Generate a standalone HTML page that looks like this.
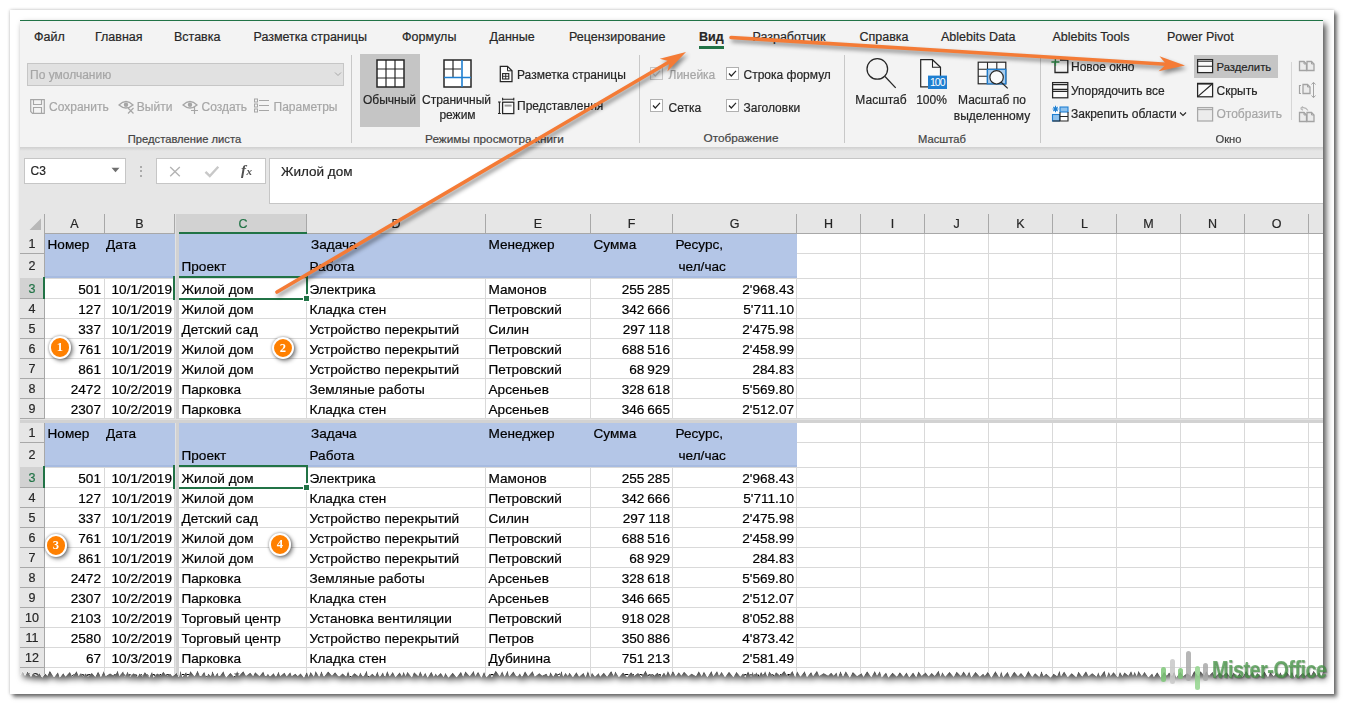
<!DOCTYPE html><html><head><meta charset="utf-8"><style>
html,body{margin:0;padding:0}
body{width:1345px;height:705px;background:#fff;position:relative;overflow:hidden;font-family:"Liberation Sans", sans-serif}
.r{position:absolute}
.t{position:absolute;white-space:pre;font-family:"Liberation Sans", sans-serif;-webkit-text-stroke:0.2px currentColor}
</style></head><body>
<div class="r" style="left:10px;top:10px;width:1324px;height:684px;background:#fff;box-shadow:0 0 3px rgba(0,0,0,.25),3px 3px 4px rgba(0,0,0,.55)"></div>
<div class="r" style="left:0;top:0;width:1345px;height:705px;filter:drop-shadow(3px 4px 3px rgba(0,0,0,.7))">
<div class="r" style="left:0;top:0;width:1345px;height:705px;clip-path:polygon(20px 20px,1323px 20px,1323.0px 671.5px,1321.0px 676.8px,1319.3px 672.1px,1316.7px 675.6px,1313.7px 670.6px,1310.9px 675.6px,1309.1px 671.8px,1305.2px 675.7px,1303.0px 672.4px,1298.6px 676.7px,1296.0px 673.4px,1294.3px 677.2px,1291.9px 670.9px,1290.1px 676.1px,1286.1px 671.0px,1282.9px 676.8px,1280.3px 672.1px,1278.6px 675.6px,1276.5px 672.5px,1273.7px 676.1px,1270.4px 671.9px,1268.0px 677.1px,1264.4px 671.2px,1261.2px 676.6px,1257.1px 672.7px,1254.7px 677.5px,1252.9px 671.8px,1249.1px 675.8px,1246.1px 670.6px,1242.6px 677.0px,1239.4px 673.1px,1237.0px 676.9px,1233.7px 672.2px,1230.8px 677.2px,1226.5px 671.9px,1223.0px 675.6px,1219.4px 672.4px,1214.9px 677.1px,1212.6px 671.7px,1209.0px 675.5px,1206.2px 671.0px,1204.3px 675.6px,1200.5px 670.9px,1198.3px 676.3px,1194.2px 670.7px,1191.3px 676.6px,1187.2px 673.0px,1183.1px 676.1px,1180.3px 671.6px,1176.2px 677.4px,1174.2px 671.0px,1172.0px 676.0px,1169.1px 672.3px,1166.8px 675.5px,1164.0px 671.6px,1160.8px 677.4px,1157.2px 672.0px,1153.9px 676.9px,1152.2px 673.2px,1148.4px 677.2px,1144.5px 671.7px,1141.8px 675.7px,1138.4px 670.7px,1136.7px 675.9px,1134.7px 671.5px,1133.0px 675.5px,1131.1px 670.8px,1128.5px 675.6px,1124.4px 672.3px,1122.4px 676.0px,1119.9px 671.6px,1118.0px 677.2px,1113.5px 671.9px,1110.6px 675.7px,1108.8px 671.5px,1106.5px 677.2px,1104.5px 670.6px,1100.2px 676.6px,1098.2px 672.1px,1096.6px 676.6px,1092.2px 673.1px,1088.6px 676.0px,1086.0px 671.0px,1082.2px 676.6px,1078.4px 671.5px,1076.2px 677.1px,1071.7px 673.1px,1067.8px 677.1px,1064.1px 671.2px,1061.0px 676.2px,1059.5px 670.6px,1057.1px 676.0px,1053.5px 673.4px,1050.7px 677.4px,1046.2px 673.4px,1043.6px 675.9px,1041.5px 671.1px,1039.3px 676.7px,1035.1px 673.0px,1032.2px 676.8px,1028.3px 670.8px,1024.8px 677.3px,1021.0px 672.8px,1018.0px 675.9px,1014.2px 671.5px,1010.3px 677.4px,1007.6px 671.7px,1003.2px 676.9px,1001.2px 670.9px,999.3px 677.3px,995.4px 670.9px,991.4px 677.5px,987.9px 671.6px,984.8px 675.8px,983.2px 673.4px,979.8px 676.6px,975.5px 671.8px,971.4px 677.2px,969.2px 671.3px,966.8px 676.0px,963.6px 671.3px,960.8px 675.8px,956.6px 671.6px,953.7px 676.7px,949.5px 671.8px,945.3px 676.5px,942.2px 672.1px,940.6px 676.4px,938.6px 670.5px,934.7px 675.8px,931.7px 672.7px,928.6px 676.2px,925.5px 672.2px,921.7px 675.7px,918.5px 671.2px,916.2px 677.0px,913.1px 672.2px,909.3px 677.3px,906.5px 672.3px,903.5px 676.5px,899.9px 671.9px,896.8px 676.5px,892.5px 672.6px,888.4px 677.4px,886.1px 672.2px,881.8px 677.2px,879.9px 670.9px,877.0px 675.6px,874.8px 670.7px,871.3px 677.1px,867.1px 671.0px,863.5px 676.8px,861.5px 673.1px,857.1px 675.9px,852.8px 671.7px,849.8px 677.5px,845.8px 671.0px,843.0px 676.5px,840.5px 671.1px,838.0px 676.9px,836.5px 672.2px,833.7px 675.5px,831.2px 672.4px,828.1px 675.6px,823.7px 672.9px,819.3px 675.7px,817.0px 670.6px,813.1px 676.0px,811.2px 671.8px,807.0px 677.1px,804.7px 670.9px,800.5px 676.6px,796.9px 670.8px,795.2px 676.9px,792.4px 670.7px,788.1px 676.8px,784.2px 670.8px,780.1px 675.6px,776.0px 671.9px,773.5px 676.6px,769.2px 671.3px,767.4px 676.6px,765.1px 670.8px,763.2px 675.6px,761.1px 671.4px,758.6px 677.0px,756.3px 672.0px,754.2px 676.2px,752.7px 671.3px,751.1px 677.0px,748.0px 671.1px,745.1px 677.4px,743.2px 673.0px,740.4px 676.5px,736.4px 671.7px,733.4px 676.9px,729.0px 671.5px,725.0px 676.9px,721.6px 671.7px,719.0px 675.6px,717.1px 670.7px,713.4px 676.0px,711.4px 670.8px,707.4px 677.2px,703.9px 671.3px,701.7px 676.1px,698.8px 671.0px,695.9px 676.0px,691.6px 673.4px,688.4px 676.0px,684.0px 671.4px,681.4px 675.5px,678.8px 671.9px,675.8px 675.9px,672.8px 670.5px,670.5px 675.7px,667.8px 670.6px,666.2px 676.1px,664.0px 672.3px,660.9px 677.0px,657.5px 672.6px,653.3px 676.3px,650.8px 673.5px,648.9px 676.9px,645.5px 670.6px,641.5px 677.3px,638.1px 672.7px,634.1px 675.8px,631.1px 672.0px,627.1px 677.1px,623.1px 672.3px,618.9px 676.9px,615.3px 671.2px,613.7px 675.8px,611.2px 670.8px,607.1px 676.6px,603.8px 672.4px,600.2px 676.5px,598.7px 672.9px,595.0px 676.5px,591.9px 672.5px,590.2px 677.0px,587.9px 670.7px,585.6px 677.0px,583.5px 672.7px,579.1px 676.5px,576.4px 671.9px,572.9px 677.0px,569.5px 672.4px,567.8px 675.8px,565.5px 672.7px,563.1px 676.6px,561.6px 670.7px,559.3px 676.8px,555.7px 672.5px,553.3px 676.5px,550.4px 671.9px,548.6px 677.3px,546.5px 673.4px,542.2px 675.5px,539.3px 673.0px,534.9px 676.4px,532.6px 671.1px,528.2px 675.9px,525.0px 670.9px,521.9px 677.4px,520.0px 673.0px,517.0px 677.3px,513.4px 671.2px,509.2px 676.5px,507.6px 670.5px,504.6px 676.4px,502.2px 670.9px,499.7px 676.1px,495.7px 670.5px,491.9px 677.2px,490.1px 673.3px,486.4px 677.3px,484.1px 671.6px,481.4px 677.5px,478.1px 671.6px,475.3px 676.1px,473.7px 670.8px,469.7px 676.1px,465.4px 671.2px,463.1px 676.5px,461.0px 671.6px,456.6px 677.3px,452.7px 672.4px,448.5px 677.4px,445.3px 672.7px,443.7px 677.0px,440.8px 672.8px,437.4px 676.1px,435.7px 673.3px,433.9px 676.4px,431.3px 671.4px,427.6px 677.5px,425.3px 672.5px,422.9px 676.6px,420.2px 671.0px,418.3px 675.9px,414.0px 672.0px,411.9px 677.3px,407.4px 671.8px,405.5px 675.9px,403.7px 671.5px,401.9px 676.0px,399.7px 672.2px,395.5px 677.0px,392.8px 671.7px,389.7px 676.3px,387.2px 670.7px,384.8px 677.4px,383.0px 672.0px,379.6px 677.2px,377.4px 671.3px,375.2px 676.3px,372.3px 673.4px,368.3px 677.2px,366.7px 670.6px,363.1px 677.3px,360.2px 672.3px,358.7px 676.3px,354.4px 673.0px,350.3px 677.4px,348.1px 670.8px,346.1px 676.5px,342.6px 673.3px,338.9px 676.8px,335.1px 671.9px,332.0px 675.6px,328.1px 671.2px,323.9px 676.8px,321.4px 670.9px,319.2px 676.8px,315.6px 670.8px,313.9px 676.5px,310.6px 671.7px,308.5px 676.7px,306.9px 671.4px,304.0px 677.4px,300.6px 673.2px,297.7px 676.0px,295.4px 673.4px,291.8px 676.1px,290.3px 672.0px,286.7px 676.3px,284.5px 672.5px,280.2px 676.0px,278.6px 671.5px,275.8px 676.9px,273.7px 672.9px,270.0px 676.5px,267.9px 673.4px,265.5px 677.1px,263.3px 671.2px,259.5px 676.1px,255.1px 672.0px,253.1px 675.9px,250.3px 672.5px,246.0px 675.8px,243.3px 671.1px,238.9px 675.8px,237.2px 670.7px,234.5px 677.3px,230.4px 672.7px,225.9px 677.4px,223.4px 671.1px,219.1px 677.0px,217.5px 672.5px,214.9px 676.2px,212.4px 671.0px,210.9px 676.1px,208.3px 673.4px,206.4px 677.4px,204.3px 671.6px,200.4px 677.1px,197.6px 670.6px,194.6px 676.2px,190.4px 671.1px,187.8px 677.3px,186.2px 671.7px,182.3px 677.0px,180.6px 670.6px,178.9px 677.3px,176.7px 672.7px,172.5px 676.2px,170.2px 673.4px,166.8px 676.0px,163.2px 671.4px,160.8px 675.5px,157.1px 673.2px,153.7px 677.4px,152.1px 671.2px,149.2px 677.4px,144.8px 671.7px,142.6px 676.4px,139.6px 673.3px,137.5px 677.1px,133.8px 673.0px,130.0px 676.7px,127.5px 671.5px,124.9px 677.1px,123.2px 671.1px,119.4px 676.0px,117.7px 670.6px,114.6px 676.2px,110.1px 673.2px,105.7px 676.0px,103.9px 670.8px,100.9px 676.9px,98.1px 671.2px,95.3px 676.7px,91.8px 672.7px,87.8px 676.8px,85.9px 673.0px,83.5px 676.6px,80.9px 672.7px,78.8px 676.0px,76.6px 671.0px,72.4px 676.7px,69.9px 671.7px,65.5px 676.5px,63.3px 672.9px,59.8px 677.5px,58.0px 671.9px,54.0px 677.2px,49.8px 670.6px,47.4px 675.7px,45.4px 673.4px,42.1px 677.4px,39.5px 673.1px,36.6px 676.0px,32.8px 673.3px,31.0px 676.7px,27.6px 671.2px,25.0px 675.8px,22.9px 671.3px,20px 675px);background:#fff">

<div class="r" style="left:20px;top:20px;width:1303px;height:1px;background:#217346"></div>
<div class="r" style="left:20px;top:21px;width:1303px;height:126px;background:#f3f3f3"></div>
<div class="r" style="left:20px;top:147px;width:1303px;height:67px;background:#e6e6e6"></div>
<div class="r" style="left:20px;top:147px;width:1303px;height:4px;background:linear-gradient(#cfcfcf,#e6e6e6)"></div>
<div class="t" style="left:34px;top:29.0px;font-size:12.5px;line-height:16px;color:#262626;font-weight:normal;">Файл</div>
<div class="t" style="left:95px;top:29.0px;font-size:12.5px;line-height:16px;color:#262626;font-weight:normal;">Главная</div>
<div class="t" style="left:174px;top:29.0px;font-size:12.5px;line-height:16px;color:#262626;font-weight:normal;">Вставка</div>
<div class="t" style="left:253.5px;top:29.0px;font-size:12.5px;line-height:16px;color:#262626;font-weight:normal;">Разметка страницы</div>
<div class="t" style="left:402px;top:29.0px;font-size:12.5px;line-height:16px;color:#262626;font-weight:normal;">Формулы</div>
<div class="t" style="left:489.5px;top:29.0px;font-size:12.5px;line-height:16px;color:#262626;font-weight:normal;">Данные</div>
<div class="t" style="left:569px;top:29.0px;font-size:12.5px;line-height:16px;color:#262626;font-weight:normal;">Рецензирование</div>
<div class="t" style="left:752.5px;top:29.0px;font-size:12.5px;line-height:16px;color:#262626;font-weight:normal;">Разработчик</div>
<div class="t" style="left:859.5px;top:29.0px;font-size:12.5px;line-height:16px;color:#262626;font-weight:normal;">Справка</div>
<div class="t" style="left:941px;top:29.0px;font-size:12.5px;line-height:16px;color:#262626;font-weight:normal;">Ablebits Data</div>
<div class="t" style="left:1052.5px;top:29.0px;font-size:12.5px;line-height:16px;color:#262626;font-weight:normal;">Ablebits Tools</div>
<div class="t" style="left:1167px;top:29.0px;font-size:12.5px;line-height:16px;color:#262626;font-weight:normal;">Power Pivot</div>
<div class="t" style="left:699px;top:29.0px;font-size:12.5px;line-height:16px;color:#262626;font-weight:bold;">Вид</div>
<div class="r" style="left:699px;top:46px;width:25px;height:3px;background:#217346"></div>
<div class="r" style="left:351px;top:55px;width:1px;height:88px;background:#c8c8c8"></div>
<div class="r" style="left:639px;top:55px;width:1px;height:88px;background:#c8c8c8"></div>
<div class="r" style="left:844px;top:55px;width:1px;height:88px;background:#c8c8c8"></div>
<div class="r" style="left:1040px;top:55px;width:1px;height:88px;background:#c8c8c8"></div>
<div class="r" style="left:1291px;top:62px;width:1px;height:58px;background:#d6d6d6"></div>
<div class="t" style="left:-15.5px;width:400px;text-align:center;top:132.0px;font-size:11.2px;line-height:14px;color:#444;font-weight:normal;">Представление листа</div>
<div class="t" style="left:294.5px;width:400px;text-align:center;top:131.5px;font-size:11.8px;line-height:15px;color:#444;font-weight:normal;">Режимы просмотра книги</div>
<div class="t" style="left:541px;width:400px;text-align:center;top:131.0px;font-size:11.8px;line-height:15px;color:#444;font-weight:normal;">Отображение</div>
<div class="t" style="left:742px;width:400px;text-align:center;top:132.0px;font-size:11.2px;line-height:14px;color:#444;font-weight:normal;">Масштаб</div>
<div class="t" style="left:1028.5px;width:400px;text-align:center;top:132.0px;font-size:11.2px;line-height:14px;color:#444;font-weight:normal;">Окно</div>
<div class="r" style="left:27px;top:63px;width:317px;height:23px;background:#e1e1e1;border:1px solid #c6c6c6;box-sizing:border-box"></div>
<div class="t" style="left:30px;top:68.0px;font-size:12px;line-height:15px;color:#a6a6a6;font-weight:normal;">По умолчанию</div>
<svg class="r" style="left:334px;top:71px" width="8" height="6" viewBox="0 0 8 6"><path d="M1 1.5 L4 4.5 L7 1.5" fill="none" stroke="#a6a6a6" stroke-width="1"/></svg>
<svg class="r" style="left:30px;top:98.5px" width="15" height="15" viewBox="0 0 15 15"><path d="M0.7 0.7H14.3V14.3H2.5L0.7 12.5Z" fill="none" stroke="#a6a6a6" stroke-width="1.2"/><path d="M3.5 0.7V5.5H11.5V0.7M3.5 14.3V8.5H11.5V14.3" fill="none" stroke="#a6a6a6" stroke-width="1.1"/></svg>
<div class="t" style="left:49px;top:99.5px;font-size:12px;line-height:15px;color:#a6a6a6;font-weight:normal;">Сохранить</div>
<svg class="r" style="left:118px;top:98px" width="17" height="16" viewBox="0 0 17 16"><path d="M1 7 Q8 0 15 7 Q8 13 1 7Z" fill="none" stroke="#a6a6a6" stroke-width="1.3"/><circle cx="8" cy="6.8" r="2.2" fill="#a6a6a6"/><path d="M10 10 L15.5 15.5 M15.5 10 L10 15.5" stroke="#a6a6a6" stroke-width="1.2"/></svg>
<div class="t" style="left:136.8px;top:99.5px;font-size:12px;line-height:15px;color:#a6a6a6;font-weight:normal;">Выйти</div>
<svg class="r" style="left:182px;top:98px" width="17" height="16" viewBox="0 0 17 16"><path d="M1 7 Q8 0 15 7 Q8 13 1 7Z" fill="none" stroke="#a6a6a6" stroke-width="1.3"/><circle cx="8" cy="6.8" r="2.2" fill="#a6a6a6"/><path d="M12.5 9 V16 M9 12.5 H16" stroke="#a6a6a6" stroke-width="1.2"/></svg>
<div class="t" style="left:201.5px;top:99.5px;font-size:12px;line-height:15px;color:#a6a6a6;font-weight:normal;">Создать</div>
<svg class="r" style="left:254px;top:98px" width="15" height="15" viewBox="0 0 15 15"><rect x="0.5" y="1" width="3" height="3" fill="none" stroke="#a6a6a6"/><rect x="0.5" y="6" width="3" height="3" fill="none" stroke="#a6a6a6"/><rect x="0.5" y="11" width="3" height="3" fill="none" stroke="#a6a6a6"/><path d="M5 2.5H15M5 7.5H15M5 12.5H15" stroke="#a6a6a6" stroke-width="1.2"/></svg>
<div class="t" style="left:273.5px;top:99.5px;font-size:12px;line-height:15px;color:#a6a6a6;font-weight:normal;">Параметры</div>
<div class="r" style="left:360px;top:54px;width:60px;height:73px;background:#c5c5c5"></div>
<svg class="r" style="left:376px;top:59px" width="29" height="29" viewBox="0 0 29 29"><rect x="1" y="1" width="27" height="27" fill="#fff" stroke="#262626" stroke-width="1.5"/><path d="M10 1V28M19 1V28M1 10H28M1 19H28" stroke="#262626" stroke-width="1.2"/></svg>
<div class="t" style="left:189.5px;width:400px;text-align:center;top:92.5px;font-size:12px;line-height:15px;color:#262626;font-weight:normal;">Обычный</div>
<svg class="r" style="left:443px;top:59px" width="29" height="29" viewBox="0 0 29 29"><rect x="1" y="1" width="27" height="27" fill="#fff" stroke="#262626" stroke-width="1.5"/><path d="M10 1V18M1 10H18" stroke="#262626" stroke-width="1.2"/><path d="M19 1V28M1 18.5H28" stroke="#1f7fd1" stroke-width="1.6"/></svg>
<div class="t" style="left:256.5px;width:400px;text-align:center;top:92.5px;font-size:12px;line-height:15px;color:#262626;font-weight:normal;">Страничный</div>
<div class="t" style="left:257.5px;width:400px;text-align:center;top:108.0px;font-size:12px;line-height:15px;color:#262626;font-weight:normal;">режим</div>
<svg class="r" style="left:499px;top:65px" width="15" height="18" viewBox="0 0 15 18"><path d="M1.3 1.3H8.5L13 5.8V16.7H1.3Z" fill="#fafafa" stroke="#262626" stroke-width="1.25"/><path d="M8.5 1.3V5.8H13" fill="none" stroke="#262626" stroke-width="1"/><rect x="3.6" y="8.6" width="6.2" height="5.4" fill="none" stroke="#262626" stroke-width="1.1"/><path d="M6.7 8.6V14M3.6 11.3H9.8" stroke="#262626" stroke-width=".9"/></svg>
<div class="t" style="left:517px;top:67.5px;font-size:12px;line-height:15px;color:#262626;font-weight:normal;">Разметка страницы</div>
<svg class="r" style="left:497px;top:97px" width="18" height="18" viewBox="0 0 18 18"><path d="M2.4 5V16.5M1 5H3.8M1 16.5H3.8M5.6 0.8V3.6M16.8 0.8V3.6M5.6 2.2H16.8" fill="none" stroke="#262626" stroke-width="1.1"/><rect x="5.6" y="5.2" width="11.2" height="11.4" fill="#fafafa" stroke="#262626" stroke-width="1.25"/><rect x="7.6" y="7.6" width="7" height="2" fill="#9a9a9a"/></svg>
<div class="t" style="left:517px;top:99.0px;font-size:12px;line-height:15px;color:#262626;font-weight:normal;">Представления</div>
<svg class="r" style="left:650px;top:67px" width="13" height="13" viewBox="0 0 13 13"><rect x="0.5" y="0.5" width="12" height="12" fill="#f0f0f0" stroke="#c6c6c6"/><path d="M3 6.5L5.3 9L10 3.8" fill="none" stroke="#c8c8c8" stroke-width="1.2"/></svg>
<div class="t" style="left:668.5px;top:68.0px;font-size:12px;line-height:15px;color:#a6a6a6;font-weight:normal;">Линейка</div>
<svg class="r" style="left:725.5px;top:67px" width="13" height="13" viewBox="0 0 13 13"><rect x="0.5" y="0.5" width="12" height="12" fill="#fff" stroke="#b0b0b0"/><path d="M3 6.5L5.3 9L10 3.8" fill="none" stroke="#262626" stroke-width="1.2"/></svg>
<div class="t" style="left:743.5px;top:68.0px;font-size:12px;line-height:15px;color:#262626;font-weight:normal;">Строка формул</div>
<svg class="r" style="left:650px;top:99px" width="13" height="13" viewBox="0 0 13 13"><rect x="0.5" y="0.5" width="12" height="12" fill="#fff" stroke="#b0b0b0"/><path d="M3 6.5L5.3 9L10 3.8" fill="none" stroke="#262626" stroke-width="1.2"/></svg>
<div class="t" style="left:668.5px;top:100.5px;font-size:12px;line-height:15px;color:#262626;font-weight:normal;">Сетка</div>
<svg class="r" style="left:725.5px;top:99px" width="13" height="13" viewBox="0 0 13 13"><rect x="0.5" y="0.5" width="12" height="12" fill="#fff" stroke="#b0b0b0"/><path d="M3 6.5L5.3 9L10 3.8" fill="none" stroke="#262626" stroke-width="1.2"/></svg>
<div class="t" style="left:743.5px;top:100.5px;font-size:12px;line-height:15px;color:#262626;font-weight:normal;">Заголовки</div>
<svg class="r" style="left:864px;top:56px" width="34" height="34" viewBox="0 0 34 34"><circle cx="13.3" cy="12.9" r="10.3" fill="none" stroke="#262626" stroke-width="1.25"/><path d="M21 20.5L31.7 31.9" stroke="#262626" stroke-width="1.25"/></svg>
<div class="t" style="left:681px;width:400px;text-align:center;top:92.5px;font-size:12px;line-height:15px;color:#262626;font-weight:normal;">Масштаб</div>
<svg class="r" style="left:918px;top:57px" width="32" height="34" viewBox="0 0 32 34"><path d="M2.7 2.7H14.5L22.5 10.2V29.8H2.7Z" fill="#fafafa" stroke="#262626" stroke-width="1.2"/><path d="M14.5 2.7V10.2H22.5" fill="none" stroke="#262626" stroke-width="1.1"/><rect x="10" y="18.6" width="19" height="13.4" fill="#1f7fd1"/><text x="19.3" y="29.3" font-size="10.5" fill="#fff" text-anchor="middle" font-family="Liberation Sans" letter-spacing="-0.9">100</text></svg>
<div class="t" style="left:731.5px;width:400px;text-align:center;top:92.5px;font-size:12px;line-height:15px;color:#262626;font-weight:normal;">100%</div>
<svg class="r" style="left:976px;top:60px" width="34" height="30" viewBox="0 0 34 30"><rect x="2.2" y="2.2" width="27.6" height="21.6" fill="#fafafa" stroke="#262626" stroke-width="1.2"/><rect x="11" y="9.3" width="18.8" height="14.5" fill="#a9cdee"/><path d="M11.5 2.2V23.8M20.8 2.2V9.3M2.2 9.3H29.8M2.2 16.2H11.5" stroke="#262626" stroke-width="1.1"/><path d="M11.3 9.3H29.8V23.8H11.3Z" fill="none" stroke="#1f7fd1" stroke-width="1.3"/><circle cx="20.6" cy="17.3" r="6.7" fill="#fafafa" stroke="#262626" stroke-width="1.2"/><path d="M25.2 22.2L31.7 28.4" stroke="#262626" stroke-width="1.2"/></svg>
<div class="t" style="left:792px;width:400px;text-align:center;top:92.5px;font-size:12px;line-height:15px;color:#262626;font-weight:normal;">Масштаб по</div>
<div class="t" style="left:792px;width:400px;text-align:center;top:108.5px;font-size:12px;line-height:15px;color:#262626;font-weight:normal;">выделенному</div>
<svg class="r" style="left:1050px;top:57px" width="20" height="18" viewBox="0 0 20 18"><path d="M5 5.5V15.5H17.8V3H10" fill="none" stroke="#262626" stroke-width="1.3"/><path d="M5.4 1V9M1.4 5H9.4" stroke="#2f8f4a" stroke-width="1.4"/></svg>
<div class="t" style="left:1071px;top:59.5px;font-size:12px;line-height:15px;color:#262626;font-weight:normal;">Новое окно</div>
<svg class="r" style="left:1050px;top:81px" width="20" height="18" viewBox="0 0 20 18"><rect x="2.6" y="1.6" width="15.2" height="15.2" fill="#fafafa" stroke="#262626" stroke-width="1.25"/><path d="M2.6 3.6H17.8M2.6 8.4H17.8M2.6 10.4H17.8" stroke="#262626" stroke-width="1.1"/></svg>
<div class="t" style="left:1071px;top:83.5px;font-size:12px;line-height:15px;color:#262626;font-weight:normal;">Упорядочить все</div>
<svg class="r" style="left:1050px;top:105px" width="20" height="18" viewBox="0 0 20 18"><rect x="2.5" y="1.5" width="15.5" height="14.5" fill="#fff"/><rect x="10" y="2" width="8" height="5" fill="#8ec2ee" stroke="#1f7fd1" stroke-width="1.1"/><rect x="2.5" y="9.5" width="7" height="6.5" fill="#8ec2ee" stroke="#1f7fd1" stroke-width="1.1"/><path d="M10 7V16M10 11.5H18M2.5 16H18V7" fill="none" stroke="#262626" stroke-width="1.1"/><path d="M5.5 0.8V7.2M2.5 4H8.5M3.3 1.8L7.7 6.2M7.7 1.8L3.3 6.2" stroke="#1f7fd1" stroke-width="1.1"/></svg>
<div class="t" style="left:1071px;top:107.0px;font-size:12px;line-height:15px;color:#262626;font-weight:normal;">Закрепить области</div>
<svg class="r" style="left:1179px;top:111px" width="8" height="6" viewBox="0 0 8 6"><path d="M1 1.5L4 4.5L7 1.5" fill="none" stroke="#262626" stroke-width="1.1"/></svg>
<div class="r" style="left:1194px;top:55px;width:84px;height:23px;background:#c5c5c5"></div>
<svg class="r" style="left:1196px;top:58px" width="18" height="16" viewBox="0 0 18 16"><rect x="1.6" y="1.6" width="15" height="13" fill="#fafafa" stroke="#262626" stroke-width="1.25"/><path d="M1.6 3.3H16.6M1.6 8.2H16.6" stroke="#262626" stroke-width="1.1"/></svg>
<div class="t" style="left:1216.5px;top:60.0px;font-size:11.3px;line-height:14px;color:#262626;font-weight:normal;">Разделить</div>
<svg class="r" style="left:1196px;top:82px" width="18" height="16" viewBox="0 0 18 16"><rect x="1.6" y="1.4" width="15" height="13.4" fill="#fafafa" stroke="#262626" stroke-width="1.25"/><path d="M1.6 1.9H16.6" stroke="#262626" stroke-width="1.4"/><path d="M2 14.4L16.2 2" stroke="#262626" stroke-width="1.2"/></svg>
<div class="t" style="left:1216.5px;top:83.5px;font-size:12px;line-height:15px;color:#262626;font-weight:normal;">Скрыть</div>
<svg class="r" style="left:1196px;top:106px" width="18" height="16" viewBox="0 0 18 16"><rect x="1.6" y="1.6" width="15" height="13.4" fill="#ececec" stroke="#a8a8a8" stroke-width="1.25"/><path d="M1.6 3.6H16.6" stroke="#a8a8a8" stroke-width="1.1"/></svg>
<div class="t" style="left:1216.5px;top:107.0px;font-size:12px;line-height:15px;color:#a6a6a6;font-weight:normal;">Отобразить</div>
<svg class="r" style="left:1297px;top:59px" width="20" height="14" viewBox="0 0 20 14"><path d="M2.5 2.5H7.0L9.5 5.0V11.5H2.5Z" fill="#ececec" stroke="#a3a3a3" stroke-width="1.3"/><path d="M7.0 2.5V5.0H9.5" fill="none" stroke="#a3a3a3" stroke-width="1"/><path d="M10 2.5H14.5L17 5.0V11.5H10Z" fill="#ececec" stroke="#a3a3a3" stroke-width="1.3"/><path d="M14.5 2.5V5.0H17" fill="none" stroke="#a3a3a3" stroke-width="1"/></svg>
<svg class="r" style="left:1297px;top:81px" width="20" height="18" viewBox="0 0 20 18"><path d="M4 4.5H2.5V12.5H4" fill="none" stroke="#a3a3a3" stroke-width="1.2"/><path d="M6 3.5H10.5L13 6.0V12.5H6Z" fill="#ececec" stroke="#a3a3a3" stroke-width="1.3"/><path d="M10.5 3.5V6.0H13" fill="none" stroke="#a3a3a3" stroke-width="1"/><path d="M16.5 1.5V16.5M14.5 3.5L16.5 1.3L18.5 3.5M14.5 14.5L16.5 16.7L18.5 14.5" fill="none" stroke="#a3a3a3" stroke-width="1"/></svg>
<svg class="r" style="left:1297px;top:104px" width="20" height="19" viewBox="0 0 20 19"><path d="M3.5 4.5Q8 2 11 6.5M3.5 4.5L6 2.5M3.5 4.5L6 6.3" fill="none" stroke="#b5b5b5" stroke-width="1.1"/><path d="M2.5 8.5H7.0L9.5 11.0V17.5H2.5Z" fill="#ececec" stroke="#a3a3a3" stroke-width="1.3"/><path d="M7.0 8.5V11.0H9.5" fill="none" stroke="#a3a3a3" stroke-width="1"/><path d="M10 8.5H14.5L17 11.0V17.5H10Z" fill="#ececec" stroke="#a3a3a3" stroke-width="1.3"/><path d="M14.5 8.5V11.0H17" fill="none" stroke="#a3a3a3" stroke-width="1"/></svg>
<div class="r" style="left:24px;top:158px;width:102px;height:26px;background:#fff;border:1px solid #c6c6c6;box-sizing:border-box"></div>
<div class="t" style="left:30.5px;top:163.5px;font-size:12px;line-height:15px;color:#262626;font-weight:normal;">C3</div>
<svg class="r" style="left:111px;top:167px" width="9" height="6" viewBox="0 0 9 6"><path d="M0.5 0.8H8.5L4.5 5.3Z" fill="#6f6f6f"/></svg>
<div class="r" style="left:140px;top:165.5px;width:2px;height:2px;background:#ababab"></div>
<div class="r" style="left:140px;top:170px;width:2px;height:2px;background:#ababab"></div>
<div class="r" style="left:140px;top:174.5px;width:2px;height:2px;background:#ababab"></div>
<div class="r" style="left:156px;top:158px;width:110px;height:26px;background:#fff;border:1px solid #c6c6c6;box-sizing:border-box"></div>
<svg class="r" style="left:169px;top:166px" width="12" height="11" viewBox="0 0 12 11"><path d="M1.2 1L10.8 10.2M10.8 1L1.2 10.2" stroke="#b4b4b4" stroke-width="1.4"/></svg>
<svg class="r" style="left:204px;top:165px" width="16" height="13" viewBox="0 0 16 13"><path d="M1.5 6.8L5.8 11L14.3 1.8" fill="none" stroke="#c8c8c8" stroke-width="2.4"/></svg>
<svg class="r" style="left:238px;top:162px" width="18" height="18" viewBox="0 0 18 18"><text x="3" y="13" font-family="Liberation Serif" font-style="italic" font-weight="bold" font-size="15" fill="#505050">f</text><text x="8.6" y="13" font-family="Liberation Serif" font-style="italic" font-weight="bold" font-size="11" fill="#505050">x</text></svg>
<div class="r" style="left:269px;top:158px;width:1060px;height:46px;background:#fff;border:1px solid #c6c6c6;box-sizing:border-box"></div>
<div class="t" style="left:281px;top:162.5px;font-size:13.5px;line-height:17px;color:#262626;font-weight:normal;">Жилой дом</div>
<div class="r" style="left:20px;top:214px;width:1303px;height:470px;background:#fff"></div>
<div class="r" style="left:20px;top:214px;width:1303px;height:19px;background:#e6e6e6"></div>
<div class="r" style="left:20px;top:233px;width:1303px;height:1px;background:#a8a8a8"></div>
<div class="r" style="left:20px;top:214px;width:24px;height:470px;background:#e6e6e6"></div>
<div class="r" style="left:44px;top:214px;width:1px;height:470px;background:#a8a8a8"></div>
<svg class="r" style="left:29px;top:218px" width="13" height="13" viewBox="0 0 13 13"><path d="M12 0.5V12H0.5Z" fill="#b8b8b8"/></svg>
<div class="r" style="left:45px;top:253px;width:1278px;height:1px;background:#d9d9d9"></div>
<div class="r" style="left:20px;top:253px;width:24px;height:1px;background:#a8a8a8"></div>
<div class="r" style="left:45px;top:278px;width:1278px;height:1px;background:#d9d9d9"></div>
<div class="r" style="left:20px;top:278px;width:24px;height:1px;background:#a8a8a8"></div>
<div class="r" style="left:45px;top:298px;width:1278px;height:1px;background:#d9d9d9"></div>
<div class="r" style="left:20px;top:298px;width:24px;height:1px;background:#a8a8a8"></div>
<div class="r" style="left:45px;top:318px;width:1278px;height:1px;background:#d9d9d9"></div>
<div class="r" style="left:20px;top:318px;width:24px;height:1px;background:#a8a8a8"></div>
<div class="r" style="left:45px;top:338px;width:1278px;height:1px;background:#d9d9d9"></div>
<div class="r" style="left:20px;top:338px;width:24px;height:1px;background:#a8a8a8"></div>
<div class="r" style="left:45px;top:358px;width:1278px;height:1px;background:#d9d9d9"></div>
<div class="r" style="left:20px;top:358px;width:24px;height:1px;background:#a8a8a8"></div>
<div class="r" style="left:45px;top:378px;width:1278px;height:1px;background:#d9d9d9"></div>
<div class="r" style="left:20px;top:378px;width:24px;height:1px;background:#a8a8a8"></div>
<div class="r" style="left:45px;top:398px;width:1278px;height:1px;background:#d9d9d9"></div>
<div class="r" style="left:20px;top:398px;width:24px;height:1px;background:#a8a8a8"></div>
<div class="r" style="left:45px;top:418px;width:1278px;height:1px;background:#d9d9d9"></div>
<div class="r" style="left:20px;top:418px;width:24px;height:1px;background:#a8a8a8"></div>
<div class="r" style="left:45px;top:442px;width:1278px;height:1px;background:#d9d9d9"></div>
<div class="r" style="left:20px;top:442px;width:24px;height:1px;background:#a8a8a8"></div>
<div class="r" style="left:45px;top:467px;width:1278px;height:1px;background:#d9d9d9"></div>
<div class="r" style="left:20px;top:467px;width:24px;height:1px;background:#a8a8a8"></div>
<div class="r" style="left:45px;top:487px;width:1278px;height:1px;background:#d9d9d9"></div>
<div class="r" style="left:20px;top:487px;width:24px;height:1px;background:#a8a8a8"></div>
<div class="r" style="left:45px;top:507px;width:1278px;height:1px;background:#d9d9d9"></div>
<div class="r" style="left:20px;top:507px;width:24px;height:1px;background:#a8a8a8"></div>
<div class="r" style="left:45px;top:527px;width:1278px;height:1px;background:#d9d9d9"></div>
<div class="r" style="left:20px;top:527px;width:24px;height:1px;background:#a8a8a8"></div>
<div class="r" style="left:45px;top:547px;width:1278px;height:1px;background:#d9d9d9"></div>
<div class="r" style="left:20px;top:547px;width:24px;height:1px;background:#a8a8a8"></div>
<div class="r" style="left:45px;top:567px;width:1278px;height:1px;background:#d9d9d9"></div>
<div class="r" style="left:20px;top:567px;width:24px;height:1px;background:#a8a8a8"></div>
<div class="r" style="left:45px;top:587px;width:1278px;height:1px;background:#d9d9d9"></div>
<div class="r" style="left:20px;top:587px;width:24px;height:1px;background:#a8a8a8"></div>
<div class="r" style="left:45px;top:607px;width:1278px;height:1px;background:#d9d9d9"></div>
<div class="r" style="left:20px;top:607px;width:24px;height:1px;background:#a8a8a8"></div>
<div class="r" style="left:45px;top:627px;width:1278px;height:1px;background:#d9d9d9"></div>
<div class="r" style="left:20px;top:627px;width:24px;height:1px;background:#a8a8a8"></div>
<div class="r" style="left:45px;top:647px;width:1278px;height:1px;background:#d9d9d9"></div>
<div class="r" style="left:20px;top:647px;width:24px;height:1px;background:#a8a8a8"></div>
<div class="r" style="left:45px;top:667px;width:1278px;height:1px;background:#d9d9d9"></div>
<div class="r" style="left:20px;top:667px;width:24px;height:1px;background:#a8a8a8"></div>
<div class="r" style="left:45px;top:687px;width:1278px;height:1px;background:#d9d9d9"></div>
<div class="r" style="left:20px;top:687px;width:24px;height:1px;background:#a8a8a8"></div>
<div class="r" style="left:104px;top:234px;width:1px;height:450px;background:#d9d9d9"></div>
<div class="r" style="left:104px;top:214px;width:1px;height:19px;background:#a8a8a8"></div>
<div class="r" style="left:174px;top:234px;width:1px;height:450px;background:#d9d9d9"></div>
<div class="r" style="left:174px;top:214px;width:1px;height:19px;background:#a8a8a8"></div>
<div class="r" style="left:306px;top:234px;width:1px;height:450px;background:#d9d9d9"></div>
<div class="r" style="left:306px;top:214px;width:1px;height:19px;background:#a8a8a8"></div>
<div class="r" style="left:485px;top:234px;width:1px;height:450px;background:#d9d9d9"></div>
<div class="r" style="left:485px;top:214px;width:1px;height:19px;background:#a8a8a8"></div>
<div class="r" style="left:590px;top:234px;width:1px;height:450px;background:#d9d9d9"></div>
<div class="r" style="left:590px;top:214px;width:1px;height:19px;background:#a8a8a8"></div>
<div class="r" style="left:672px;top:234px;width:1px;height:450px;background:#d9d9d9"></div>
<div class="r" style="left:672px;top:214px;width:1px;height:19px;background:#a8a8a8"></div>
<div class="r" style="left:796px;top:234px;width:1px;height:450px;background:#d9d9d9"></div>
<div class="r" style="left:796px;top:214px;width:1px;height:19px;background:#a8a8a8"></div>
<div class="r" style="left:860px;top:234px;width:1px;height:450px;background:#d9d9d9"></div>
<div class="r" style="left:860px;top:214px;width:1px;height:19px;background:#a8a8a8"></div>
<div class="r" style="left:924px;top:234px;width:1px;height:450px;background:#d9d9d9"></div>
<div class="r" style="left:924px;top:214px;width:1px;height:19px;background:#a8a8a8"></div>
<div class="r" style="left:988px;top:234px;width:1px;height:450px;background:#d9d9d9"></div>
<div class="r" style="left:988px;top:214px;width:1px;height:19px;background:#a8a8a8"></div>
<div class="r" style="left:1052px;top:234px;width:1px;height:450px;background:#d9d9d9"></div>
<div class="r" style="left:1052px;top:214px;width:1px;height:19px;background:#a8a8a8"></div>
<div class="r" style="left:1116px;top:234px;width:1px;height:450px;background:#d9d9d9"></div>
<div class="r" style="left:1116px;top:214px;width:1px;height:19px;background:#a8a8a8"></div>
<div class="r" style="left:1180px;top:234px;width:1px;height:450px;background:#d9d9d9"></div>
<div class="r" style="left:1180px;top:214px;width:1px;height:19px;background:#a8a8a8"></div>
<div class="r" style="left:1244px;top:234px;width:1px;height:450px;background:#d9d9d9"></div>
<div class="r" style="left:1244px;top:214px;width:1px;height:19px;background:#a8a8a8"></div>
<div class="r" style="left:1308px;top:234px;width:1px;height:450px;background:#d9d9d9"></div>
<div class="r" style="left:1308px;top:214px;width:1px;height:19px;background:#a8a8a8"></div>
<div class="r" style="left:45px;top:234px;width:752px;height:44px;background:#b4c6e7"></div>
<div class="r" style="left:45px;top:276px;width:752px;height:2px;background:#a7bbe0"></div>
<div class="r" style="left:45px;top:423px;width:752px;height:44px;background:#b4c6e7"></div>
<div class="r" style="left:45px;top:465px;width:752px;height:2px;background:#a7bbe0"></div>
<div class="r" style="left:176px;top:214px;width:130px;height:19px;background:#d2d2d2"></div>
<div class="r" style="left:179px;top:232px;width:128px;height:2px;background:#217346"></div>
<div class="r" style="left:20px;top:278px;width:24px;height:20px;background:#d2d2d2"></div>
<div class="r" style="left:43px;top:277px;width:2px;height:22px;background:#217346"></div>
<div class="r" style="left:20px;top:467px;width:24px;height:20px;background:#d2d2d2"></div>
<div class="r" style="left:43px;top:466px;width:2px;height:22px;background:#217346"></div>
<div class="r" style="left:175px;top:214px;width:4px;height:470px;background:#d2d2d2"></div>
<div class="r" style="left:175px;top:214px;width:1px;height:470px;background:#e2e2e2"></div>
<div class="r" style="left:20px;top:419px;width:1303px;height:4px;background:#d2d2d2"></div>
<div class="r" style="left:20px;top:419px;width:1303px;height:1px;background:#e2e2e2"></div>
<div class="t" style="left:-125.5px;width:400px;text-align:center;top:215.5px;font-size:12.5px;line-height:16px;color:#262626;font-weight:normal;">A</div>
<div class="t" style="left:-60.5px;width:400px;text-align:center;top:215.5px;font-size:12.5px;line-height:16px;color:#262626;font-weight:normal;">B</div>
<div class="t" style="left:43.0px;width:400px;text-align:center;top:215.5px;font-size:12.5px;line-height:16px;color:#217346;font-weight:normal;">C</div>
<div class="t" style="left:196.0px;width:400px;text-align:center;top:215.5px;font-size:12.5px;line-height:16px;color:#262626;font-weight:normal;">D</div>
<div class="t" style="left:338.0px;width:400px;text-align:center;top:215.5px;font-size:12.5px;line-height:16px;color:#262626;font-weight:normal;">E</div>
<div class="t" style="left:431.5px;width:400px;text-align:center;top:215.5px;font-size:12.5px;line-height:16px;color:#262626;font-weight:normal;">F</div>
<div class="t" style="left:534.5px;width:400px;text-align:center;top:215.5px;font-size:12.5px;line-height:16px;color:#262626;font-weight:normal;">G</div>
<div class="t" style="left:628.5px;width:400px;text-align:center;top:215.5px;font-size:12.5px;line-height:16px;color:#262626;font-weight:normal;">H</div>
<div class="t" style="left:692.5px;width:400px;text-align:center;top:215.5px;font-size:12.5px;line-height:16px;color:#262626;font-weight:normal;">I</div>
<div class="t" style="left:756.5px;width:400px;text-align:center;top:215.5px;font-size:12.5px;line-height:16px;color:#262626;font-weight:normal;">J</div>
<div class="t" style="left:820.5px;width:400px;text-align:center;top:215.5px;font-size:12.5px;line-height:16px;color:#262626;font-weight:normal;">K</div>
<div class="t" style="left:884.5px;width:400px;text-align:center;top:215.5px;font-size:12.5px;line-height:16px;color:#262626;font-weight:normal;">L</div>
<div class="t" style="left:948.5px;width:400px;text-align:center;top:215.5px;font-size:12.5px;line-height:16px;color:#262626;font-weight:normal;">M</div>
<div class="t" style="left:1012.5px;width:400px;text-align:center;top:215.5px;font-size:12.5px;line-height:16px;color:#262626;font-weight:normal;">N</div>
<div class="t" style="left:1076.5px;width:400px;text-align:center;top:215.5px;font-size:12.5px;line-height:16px;color:#262626;font-weight:normal;">O</div>
<div class="r" style="left:173px;top:276px;width:2px;height:24px;background:#217346"></div>
<div class="r" style="left:179px;top:276px;width:129px;height:2px;background:#217346"></div>
<div class="r" style="left:179px;top:298px;width:124px;height:2px;background:#217346"></div>
<div class="r" style="left:306px;top:276px;width:2px;height:18px;background:#217346"></div>
<div class="r" style="left:304px;top:296px;width:5px;height:5px;background:#217346;box-shadow:0 0 0 1px #fff"></div>
<div class="r" style="left:173px;top:465px;width:2px;height:24px;background:#217346"></div>
<div class="r" style="left:179px;top:465px;width:129px;height:2px;background:#217346"></div>
<div class="r" style="left:179px;top:487px;width:124px;height:2px;background:#217346"></div>
<div class="r" style="left:306px;top:465px;width:2px;height:18px;background:#217346"></div>
<div class="r" style="left:304px;top:485px;width:5px;height:5px;background:#217346;box-shadow:0 0 0 1px #fff"></div>
<div class="t" style="left:47.5px;top:236.3px;font-size:13.6px;line-height:17px;color:#000;font-weight:normal;">Номер</div>
<div class="t" style="left:106px;top:236.3px;font-size:13.6px;line-height:17px;color:#000;font-weight:normal;">Дата</div>
<div class="t" style="left:311px;top:236.3px;font-size:13.6px;line-height:17px;color:#000;font-weight:normal;">Задача</div>
<div class="t" style="left:488.5px;top:236.3px;font-size:13.6px;line-height:17px;color:#000;font-weight:normal;">Менеджер</div>
<div class="t" style="left:593.5px;top:236.3px;font-size:13.6px;line-height:17px;color:#000;font-weight:normal;">Сумма</div>
<div class="t" style="left:675.5px;top:236.3px;font-size:13.6px;line-height:17px;color:#000;font-weight:normal;">Ресурс,</div>
<div class="t" style="left:181.5px;top:258.0px;font-size:13.6px;line-height:17px;color:#000;font-weight:normal;">Проект</div>
<div class="t" style="left:309.5px;top:258.0px;font-size:13.6px;line-height:17px;color:#000;font-weight:normal;">Работа</div>
<div class="t" style="left:678.5px;top:258.0px;font-size:13.6px;line-height:17px;color:#000;font-weight:normal;">чел/час</div>
<div class="t" style="right:1244px;top:280.8px;font-size:13.6px;line-height:17px;color:#000;font-weight:normal;">501</div>
<div class="t" style="right:1173px;top:280.8px;font-size:13.6px;line-height:17px;color:#000;font-weight:normal;">10/1/2019</div>
<div class="t" style="left:181.5px;top:280.8px;font-size:13.6px;line-height:17px;color:#000;font-weight:normal;">Жилой дом</div>
<div class="t" style="left:309.5px;top:280.8px;font-size:13.6px;line-height:17px;color:#000;font-weight:normal;">Электрика</div>
<div class="t" style="left:488.5px;top:280.8px;font-size:13.6px;line-height:17px;color:#000;font-weight:normal;">Мамонов</div>
<div class="t" style="right:675px;top:280.8px;font-size:13.6px;line-height:17px;color:#000;font-weight:normal;word-spacing:-0.8px">255 285</div>
<div class="t" style="right:551px;top:280.8px;font-size:13.6px;line-height:17px;color:#000;font-weight:normal;">2&#x27;968.43</div>
<div class="t" style="right:1244px;top:300.8px;font-size:13.6px;line-height:17px;color:#000;font-weight:normal;">127</div>
<div class="t" style="right:1173px;top:300.8px;font-size:13.6px;line-height:17px;color:#000;font-weight:normal;">10/1/2019</div>
<div class="t" style="left:181.5px;top:300.8px;font-size:13.6px;line-height:17px;color:#000;font-weight:normal;">Жилой дом</div>
<div class="t" style="left:309.5px;top:300.8px;font-size:13.6px;line-height:17px;color:#000;font-weight:normal;">Кладка стен</div>
<div class="t" style="left:488.5px;top:300.8px;font-size:13.6px;line-height:17px;color:#000;font-weight:normal;">Петровский</div>
<div class="t" style="right:675px;top:300.8px;font-size:13.6px;line-height:17px;color:#000;font-weight:normal;word-spacing:-0.8px">342 666</div>
<div class="t" style="right:551px;top:300.8px;font-size:13.6px;line-height:17px;color:#000;font-weight:normal;">5&#x27;711.10</div>
<div class="t" style="right:1244px;top:320.8px;font-size:13.6px;line-height:17px;color:#000;font-weight:normal;">337</div>
<div class="t" style="right:1173px;top:320.8px;font-size:13.6px;line-height:17px;color:#000;font-weight:normal;">10/1/2019</div>
<div class="t" style="left:181.5px;top:320.8px;font-size:13.6px;line-height:17px;color:#000;font-weight:normal;">Детский сад</div>
<div class="t" style="left:309.5px;top:320.8px;font-size:13.6px;line-height:17px;color:#000;font-weight:normal;">Устройство перекрытий</div>
<div class="t" style="left:488.5px;top:320.8px;font-size:13.6px;line-height:17px;color:#000;font-weight:normal;">Силин</div>
<div class="t" style="right:675px;top:320.8px;font-size:13.6px;line-height:17px;color:#000;font-weight:normal;word-spacing:-0.8px">297 118</div>
<div class="t" style="right:551px;top:320.8px;font-size:13.6px;line-height:17px;color:#000;font-weight:normal;">2&#x27;475.98</div>
<div class="t" style="right:1244px;top:340.8px;font-size:13.6px;line-height:17px;color:#000;font-weight:normal;">761</div>
<div class="t" style="right:1173px;top:340.8px;font-size:13.6px;line-height:17px;color:#000;font-weight:normal;">10/1/2019</div>
<div class="t" style="left:181.5px;top:340.8px;font-size:13.6px;line-height:17px;color:#000;font-weight:normal;">Жилой дом</div>
<div class="t" style="left:309.5px;top:340.8px;font-size:13.6px;line-height:17px;color:#000;font-weight:normal;">Устройство перекрытий</div>
<div class="t" style="left:488.5px;top:340.8px;font-size:13.6px;line-height:17px;color:#000;font-weight:normal;">Петровский</div>
<div class="t" style="right:675px;top:340.8px;font-size:13.6px;line-height:17px;color:#000;font-weight:normal;word-spacing:-0.8px">688 516</div>
<div class="t" style="right:551px;top:340.8px;font-size:13.6px;line-height:17px;color:#000;font-weight:normal;">2&#x27;458.99</div>
<div class="t" style="right:1244px;top:360.8px;font-size:13.6px;line-height:17px;color:#000;font-weight:normal;">861</div>
<div class="t" style="right:1173px;top:360.8px;font-size:13.6px;line-height:17px;color:#000;font-weight:normal;">10/1/2019</div>
<div class="t" style="left:181.5px;top:360.8px;font-size:13.6px;line-height:17px;color:#000;font-weight:normal;">Жилой дом</div>
<div class="t" style="left:309.5px;top:360.8px;font-size:13.6px;line-height:17px;color:#000;font-weight:normal;">Устройство перекрытий</div>
<div class="t" style="left:488.5px;top:360.8px;font-size:13.6px;line-height:17px;color:#000;font-weight:normal;">Петровский</div>
<div class="t" style="right:675px;top:360.8px;font-size:13.6px;line-height:17px;color:#000;font-weight:normal;word-spacing:-0.8px">68 929</div>
<div class="t" style="right:551px;top:360.8px;font-size:13.6px;line-height:17px;color:#000;font-weight:normal;">284.83</div>
<div class="t" style="right:1244px;top:380.8px;font-size:13.6px;line-height:17px;color:#000;font-weight:normal;">2472</div>
<div class="t" style="right:1173px;top:380.8px;font-size:13.6px;line-height:17px;color:#000;font-weight:normal;">10/2/2019</div>
<div class="t" style="left:181.5px;top:380.8px;font-size:13.6px;line-height:17px;color:#000;font-weight:normal;">Парковка</div>
<div class="t" style="left:309.5px;top:380.8px;font-size:13.6px;line-height:17px;color:#000;font-weight:normal;">Земляные работы</div>
<div class="t" style="left:488.5px;top:380.8px;font-size:13.6px;line-height:17px;color:#000;font-weight:normal;">Арсеньев</div>
<div class="t" style="right:675px;top:380.8px;font-size:13.6px;line-height:17px;color:#000;font-weight:normal;word-spacing:-0.8px">328 618</div>
<div class="t" style="right:551px;top:380.8px;font-size:13.6px;line-height:17px;color:#000;font-weight:normal;">5&#x27;569.80</div>
<div class="t" style="right:1244px;top:400.8px;font-size:13.6px;line-height:17px;color:#000;font-weight:normal;">2307</div>
<div class="t" style="right:1173px;top:400.8px;font-size:13.6px;line-height:17px;color:#000;font-weight:normal;">10/2/2019</div>
<div class="t" style="left:181.5px;top:400.8px;font-size:13.6px;line-height:17px;color:#000;font-weight:normal;">Парковка</div>
<div class="t" style="left:309.5px;top:400.8px;font-size:13.6px;line-height:17px;color:#000;font-weight:normal;">Кладка стен</div>
<div class="t" style="left:488.5px;top:400.8px;font-size:13.6px;line-height:17px;color:#000;font-weight:normal;">Арсеньев</div>
<div class="t" style="right:675px;top:400.8px;font-size:13.6px;line-height:17px;color:#000;font-weight:normal;word-spacing:-0.8px">346 665</div>
<div class="t" style="right:551px;top:400.8px;font-size:13.6px;line-height:17px;color:#000;font-weight:normal;">2&#x27;512.07</div>
<div class="t" style="left:47.5px;top:425.3px;font-size:13.6px;line-height:17px;color:#000;font-weight:normal;">Номер</div>
<div class="t" style="left:106px;top:425.3px;font-size:13.6px;line-height:17px;color:#000;font-weight:normal;">Дата</div>
<div class="t" style="left:311px;top:425.3px;font-size:13.6px;line-height:17px;color:#000;font-weight:normal;">Задача</div>
<div class="t" style="left:488.5px;top:425.3px;font-size:13.6px;line-height:17px;color:#000;font-weight:normal;">Менеджер</div>
<div class="t" style="left:593.5px;top:425.3px;font-size:13.6px;line-height:17px;color:#000;font-weight:normal;">Сумма</div>
<div class="t" style="left:675.5px;top:425.3px;font-size:13.6px;line-height:17px;color:#000;font-weight:normal;">Ресурс,</div>
<div class="t" style="left:181.5px;top:447.0px;font-size:13.6px;line-height:17px;color:#000;font-weight:normal;">Проект</div>
<div class="t" style="left:309.5px;top:447.0px;font-size:13.6px;line-height:17px;color:#000;font-weight:normal;">Работа</div>
<div class="t" style="left:678.5px;top:447.0px;font-size:13.6px;line-height:17px;color:#000;font-weight:normal;">чел/час</div>
<div class="t" style="right:1244px;top:469.8px;font-size:13.6px;line-height:17px;color:#000;font-weight:normal;">501</div>
<div class="t" style="right:1173px;top:469.8px;font-size:13.6px;line-height:17px;color:#000;font-weight:normal;">10/1/2019</div>
<div class="t" style="left:181.5px;top:469.8px;font-size:13.6px;line-height:17px;color:#000;font-weight:normal;">Жилой дом</div>
<div class="t" style="left:309.5px;top:469.8px;font-size:13.6px;line-height:17px;color:#000;font-weight:normal;">Электрика</div>
<div class="t" style="left:488.5px;top:469.8px;font-size:13.6px;line-height:17px;color:#000;font-weight:normal;">Мамонов</div>
<div class="t" style="right:675px;top:469.8px;font-size:13.6px;line-height:17px;color:#000;font-weight:normal;word-spacing:-0.8px">255 285</div>
<div class="t" style="right:551px;top:469.8px;font-size:13.6px;line-height:17px;color:#000;font-weight:normal;">2&#x27;968.43</div>
<div class="t" style="right:1244px;top:489.8px;font-size:13.6px;line-height:17px;color:#000;font-weight:normal;">127</div>
<div class="t" style="right:1173px;top:489.8px;font-size:13.6px;line-height:17px;color:#000;font-weight:normal;">10/1/2019</div>
<div class="t" style="left:181.5px;top:489.8px;font-size:13.6px;line-height:17px;color:#000;font-weight:normal;">Жилой дом</div>
<div class="t" style="left:309.5px;top:489.8px;font-size:13.6px;line-height:17px;color:#000;font-weight:normal;">Кладка стен</div>
<div class="t" style="left:488.5px;top:489.8px;font-size:13.6px;line-height:17px;color:#000;font-weight:normal;">Петровский</div>
<div class="t" style="right:675px;top:489.8px;font-size:13.6px;line-height:17px;color:#000;font-weight:normal;word-spacing:-0.8px">342 666</div>
<div class="t" style="right:551px;top:489.8px;font-size:13.6px;line-height:17px;color:#000;font-weight:normal;">5&#x27;711.10</div>
<div class="t" style="right:1244px;top:509.8px;font-size:13.6px;line-height:17px;color:#000;font-weight:normal;">337</div>
<div class="t" style="right:1173px;top:509.8px;font-size:13.6px;line-height:17px;color:#000;font-weight:normal;">10/1/2019</div>
<div class="t" style="left:181.5px;top:509.8px;font-size:13.6px;line-height:17px;color:#000;font-weight:normal;">Детский сад</div>
<div class="t" style="left:309.5px;top:509.8px;font-size:13.6px;line-height:17px;color:#000;font-weight:normal;">Устройство перекрытий</div>
<div class="t" style="left:488.5px;top:509.8px;font-size:13.6px;line-height:17px;color:#000;font-weight:normal;">Силин</div>
<div class="t" style="right:675px;top:509.8px;font-size:13.6px;line-height:17px;color:#000;font-weight:normal;word-spacing:-0.8px">297 118</div>
<div class="t" style="right:551px;top:509.8px;font-size:13.6px;line-height:17px;color:#000;font-weight:normal;">2&#x27;475.98</div>
<div class="t" style="right:1244px;top:529.8px;font-size:13.6px;line-height:17px;color:#000;font-weight:normal;">761</div>
<div class="t" style="right:1173px;top:529.8px;font-size:13.6px;line-height:17px;color:#000;font-weight:normal;">10/1/2019</div>
<div class="t" style="left:181.5px;top:529.8px;font-size:13.6px;line-height:17px;color:#000;font-weight:normal;">Жилой дом</div>
<div class="t" style="left:309.5px;top:529.8px;font-size:13.6px;line-height:17px;color:#000;font-weight:normal;">Устройство перекрытий</div>
<div class="t" style="left:488.5px;top:529.8px;font-size:13.6px;line-height:17px;color:#000;font-weight:normal;">Петровский</div>
<div class="t" style="right:675px;top:529.8px;font-size:13.6px;line-height:17px;color:#000;font-weight:normal;word-spacing:-0.8px">688 516</div>
<div class="t" style="right:551px;top:529.8px;font-size:13.6px;line-height:17px;color:#000;font-weight:normal;">2&#x27;458.99</div>
<div class="t" style="right:1244px;top:549.8px;font-size:13.6px;line-height:17px;color:#000;font-weight:normal;">861</div>
<div class="t" style="right:1173px;top:549.8px;font-size:13.6px;line-height:17px;color:#000;font-weight:normal;">10/1/2019</div>
<div class="t" style="left:181.5px;top:549.8px;font-size:13.6px;line-height:17px;color:#000;font-weight:normal;">Жилой дом</div>
<div class="t" style="left:309.5px;top:549.8px;font-size:13.6px;line-height:17px;color:#000;font-weight:normal;">Устройство перекрытий</div>
<div class="t" style="left:488.5px;top:549.8px;font-size:13.6px;line-height:17px;color:#000;font-weight:normal;">Петровский</div>
<div class="t" style="right:675px;top:549.8px;font-size:13.6px;line-height:17px;color:#000;font-weight:normal;word-spacing:-0.8px">68 929</div>
<div class="t" style="right:551px;top:549.8px;font-size:13.6px;line-height:17px;color:#000;font-weight:normal;">284.83</div>
<div class="t" style="right:1244px;top:569.8px;font-size:13.6px;line-height:17px;color:#000;font-weight:normal;">2472</div>
<div class="t" style="right:1173px;top:569.8px;font-size:13.6px;line-height:17px;color:#000;font-weight:normal;">10/2/2019</div>
<div class="t" style="left:181.5px;top:569.8px;font-size:13.6px;line-height:17px;color:#000;font-weight:normal;">Парковка</div>
<div class="t" style="left:309.5px;top:569.8px;font-size:13.6px;line-height:17px;color:#000;font-weight:normal;">Земляные работы</div>
<div class="t" style="left:488.5px;top:569.8px;font-size:13.6px;line-height:17px;color:#000;font-weight:normal;">Арсеньев</div>
<div class="t" style="right:675px;top:569.8px;font-size:13.6px;line-height:17px;color:#000;font-weight:normal;word-spacing:-0.8px">328 618</div>
<div class="t" style="right:551px;top:569.8px;font-size:13.6px;line-height:17px;color:#000;font-weight:normal;">5&#x27;569.80</div>
<div class="t" style="right:1244px;top:589.8px;font-size:13.6px;line-height:17px;color:#000;font-weight:normal;">2307</div>
<div class="t" style="right:1173px;top:589.8px;font-size:13.6px;line-height:17px;color:#000;font-weight:normal;">10/2/2019</div>
<div class="t" style="left:181.5px;top:589.8px;font-size:13.6px;line-height:17px;color:#000;font-weight:normal;">Парковка</div>
<div class="t" style="left:309.5px;top:589.8px;font-size:13.6px;line-height:17px;color:#000;font-weight:normal;">Кладка стен</div>
<div class="t" style="left:488.5px;top:589.8px;font-size:13.6px;line-height:17px;color:#000;font-weight:normal;">Арсеньев</div>
<div class="t" style="right:675px;top:589.8px;font-size:13.6px;line-height:17px;color:#000;font-weight:normal;word-spacing:-0.8px">346 665</div>
<div class="t" style="right:551px;top:589.8px;font-size:13.6px;line-height:17px;color:#000;font-weight:normal;">2&#x27;512.07</div>
<div class="t" style="right:1244px;top:609.8px;font-size:13.6px;line-height:17px;color:#000;font-weight:normal;">2103</div>
<div class="t" style="right:1173px;top:609.8px;font-size:13.6px;line-height:17px;color:#000;font-weight:normal;">10/2/2019</div>
<div class="t" style="left:181.5px;top:609.8px;font-size:13.6px;line-height:17px;color:#000;font-weight:normal;">Торговый центр</div>
<div class="t" style="left:309.5px;top:609.8px;font-size:13.6px;line-height:17px;color:#000;font-weight:normal;">Установка вентиляции</div>
<div class="t" style="left:488.5px;top:609.8px;font-size:13.6px;line-height:17px;color:#000;font-weight:normal;">Петровский</div>
<div class="t" style="right:675px;top:609.8px;font-size:13.6px;line-height:17px;color:#000;font-weight:normal;word-spacing:-0.8px">918 028</div>
<div class="t" style="right:551px;top:609.8px;font-size:13.6px;line-height:17px;color:#000;font-weight:normal;">8&#x27;052.88</div>
<div class="t" style="right:1244px;top:629.8px;font-size:13.6px;line-height:17px;color:#000;font-weight:normal;">2580</div>
<div class="t" style="right:1173px;top:629.8px;font-size:13.6px;line-height:17px;color:#000;font-weight:normal;">10/2/2019</div>
<div class="t" style="left:181.5px;top:629.8px;font-size:13.6px;line-height:17px;color:#000;font-weight:normal;">Торговый центр</div>
<div class="t" style="left:309.5px;top:629.8px;font-size:13.6px;line-height:17px;color:#000;font-weight:normal;">Устройство перекрытий</div>
<div class="t" style="left:488.5px;top:629.8px;font-size:13.6px;line-height:17px;color:#000;font-weight:normal;">Петров</div>
<div class="t" style="right:675px;top:629.8px;font-size:13.6px;line-height:17px;color:#000;font-weight:normal;word-spacing:-0.8px">350 886</div>
<div class="t" style="right:551px;top:629.8px;font-size:13.6px;line-height:17px;color:#000;font-weight:normal;">4&#x27;873.42</div>
<div class="t" style="right:1244px;top:649.8px;font-size:13.6px;line-height:17px;color:#000;font-weight:normal;">67</div>
<div class="t" style="right:1173px;top:649.8px;font-size:13.6px;line-height:17px;color:#000;font-weight:normal;">10/3/2019</div>
<div class="t" style="left:181.5px;top:649.8px;font-size:13.6px;line-height:17px;color:#000;font-weight:normal;">Парковка</div>
<div class="t" style="left:309.5px;top:649.8px;font-size:13.6px;line-height:17px;color:#000;font-weight:normal;">Кладка стен</div>
<div class="t" style="left:488.5px;top:649.8px;font-size:13.6px;line-height:17px;color:#000;font-weight:normal;">Дубинина</div>
<div class="t" style="right:675px;top:649.8px;font-size:13.6px;line-height:17px;color:#000;font-weight:normal;word-spacing:-0.8px">751 213</div>
<div class="t" style="right:551px;top:649.8px;font-size:13.6px;line-height:17px;color:#000;font-weight:normal;">2&#x27;581.49</div>
<div class="t" style="right:1244px;top:669.8px;font-size:13.6px;line-height:17px;color:#000;font-weight:normal;">1234</div>
<div class="t" style="right:1173px;top:669.8px;font-size:13.6px;line-height:17px;color:#000;font-weight:normal;">10/3/2019</div>
<div class="t" style="left:181.5px;top:669.8px;font-size:13.6px;line-height:17px;color:#000;font-weight:normal;">Торговый центр</div>
<div class="t" style="left:309.5px;top:669.8px;font-size:13.6px;line-height:17px;color:#000;font-weight:normal;">Кладка стен</div>
<div class="t" style="left:488.5px;top:669.8px;font-size:13.6px;line-height:17px;color:#000;font-weight:normal;">Петровский</div>
<div class="t" style="right:675px;top:669.8px;font-size:13.6px;line-height:17px;color:#000;font-weight:normal;word-spacing:-0.8px">512 344</div>
<div class="t" style="right:551px;top:669.8px;font-size:13.6px;line-height:17px;color:#000;font-weight:normal;">3&#x27;210.55</div>
<div class="t" style="left:-168px;width:400px;text-align:center;top:235.8px;font-size:12.5px;line-height:16px;color:#262626;font-weight:normal;">1</div>
<div class="t" style="left:-168px;width:400px;text-align:center;top:258.3px;font-size:12.5px;line-height:16px;color:#262626;font-weight:normal;">2</div>
<div class="t" style="left:-168px;width:400px;text-align:center;top:280.8px;font-size:12.5px;line-height:16px;color:#217346;font-weight:normal;">3</div>
<div class="t" style="left:-168px;width:400px;text-align:center;top:300.8px;font-size:12.5px;line-height:16px;color:#262626;font-weight:normal;">4</div>
<div class="t" style="left:-168px;width:400px;text-align:center;top:320.8px;font-size:12.5px;line-height:16px;color:#262626;font-weight:normal;">5</div>
<div class="t" style="left:-168px;width:400px;text-align:center;top:340.8px;font-size:12.5px;line-height:16px;color:#262626;font-weight:normal;">6</div>
<div class="t" style="left:-168px;width:400px;text-align:center;top:360.8px;font-size:12.5px;line-height:16px;color:#262626;font-weight:normal;">7</div>
<div class="t" style="left:-168px;width:400px;text-align:center;top:380.8px;font-size:12.5px;line-height:16px;color:#262626;font-weight:normal;">8</div>
<div class="t" style="left:-168px;width:400px;text-align:center;top:400.8px;font-size:12.5px;line-height:16px;color:#262626;font-weight:normal;">9</div>
<div class="t" style="left:-168px;width:400px;text-align:center;top:424.8px;font-size:12.5px;line-height:16px;color:#262626;font-weight:normal;">1</div>
<div class="t" style="left:-168px;width:400px;text-align:center;top:447.3px;font-size:12.5px;line-height:16px;color:#262626;font-weight:normal;">2</div>
<div class="t" style="left:-168px;width:400px;text-align:center;top:469.8px;font-size:12.5px;line-height:16px;color:#217346;font-weight:normal;">3</div>
<div class="t" style="left:-168px;width:400px;text-align:center;top:489.8px;font-size:12.5px;line-height:16px;color:#262626;font-weight:normal;">4</div>
<div class="t" style="left:-168px;width:400px;text-align:center;top:509.8px;font-size:12.5px;line-height:16px;color:#262626;font-weight:normal;">5</div>
<div class="t" style="left:-168px;width:400px;text-align:center;top:529.8px;font-size:12.5px;line-height:16px;color:#262626;font-weight:normal;">6</div>
<div class="t" style="left:-168px;width:400px;text-align:center;top:549.8px;font-size:12.5px;line-height:16px;color:#262626;font-weight:normal;">7</div>
<div class="t" style="left:-168px;width:400px;text-align:center;top:569.8px;font-size:12.5px;line-height:16px;color:#262626;font-weight:normal;">8</div>
<div class="t" style="left:-168px;width:400px;text-align:center;top:589.8px;font-size:12.5px;line-height:16px;color:#262626;font-weight:normal;">9</div>
<div class="t" style="left:-168px;width:400px;text-align:center;top:609.8px;font-size:12.5px;line-height:16px;color:#262626;font-weight:normal;">10</div>
<div class="t" style="left:-168px;width:400px;text-align:center;top:629.8px;font-size:12.5px;line-height:16px;color:#262626;font-weight:normal;">11</div>
<div class="t" style="left:-168px;width:400px;text-align:center;top:649.8px;font-size:12.5px;line-height:16px;color:#262626;font-weight:normal;">12</div>
<div class="t" style="left:-168px;width:400px;text-align:center;top:669.8px;font-size:12.5px;line-height:16px;color:#262626;font-weight:normal;">13</div>
</div></div>
<svg class="r" style="left:0;top:0;filter:drop-shadow(2px 3px 2px rgba(0,0,0,.45))" width="1345" height="705">
<path d="M277,292 L669.9,61.5" stroke="#f47b36" stroke-width="3.6" stroke-linecap="round"/><path d="M686.0,52.0 L667.4,71.6 L669.9,61.5 L659.8,58.7Z" fill="#f47b36"/>
<path d="M731,37.5 L1166.3,64.3" stroke="#f47b36" stroke-width="3.6" stroke-linecap="round"/><path d="M1185.0,65.4 L1158.6,71.3 L1166.3,64.3 L1159.5,56.3Z" fill="#f47b36"/>
</svg>
<div class="r" style="left:48.7px;top:336.1px;width:18.6px;height:18.6px;border-radius:50%;background:#ff8000;border:2.6px solid #fff;box-shadow:0 0 3px rgba(0,0,0,.4),2px 2px 4px rgba(0,0,0,.45);color:#fff;font:bold 12.5px/18.6px 'Liberation Serif',serif;text-align:center">1</div>
<div class="r" style="left:271.70000000000005px;top:336.70000000000005px;width:18.6px;height:18.6px;border-radius:50%;background:#ff8000;border:2.6px solid #fff;box-shadow:0 0 3px rgba(0,0,0,.4),2px 2px 4px rgba(0,0,0,.45);color:#fff;font:bold 12.5px/18.6px 'Liberation Serif',serif;text-align:center">2</div>
<div class="r" style="left:44.6px;top:534.1px;width:18.6px;height:18.6px;border-radius:50%;background:#ff8000;border:2.6px solid #fff;box-shadow:0 0 3px rgba(0,0,0,.4),2px 2px 4px rgba(0,0,0,.45);color:#fff;font:bold 12.5px/18.6px 'Liberation Serif',serif;text-align:center">3</div>
<div class="r" style="left:268.5px;top:533.1px;width:18.6px;height:18.6px;border-radius:50%;background:#ff8000;border:2.6px solid #fff;box-shadow:0 0 3px rgba(0,0,0,.4),2px 2px 4px rgba(0,0,0,.45);color:#fff;font:bold 12.5px/18.6px 'Liberation Serif',serif;text-align:center">4</div>
<div class="r" style="left:1160.9px;top:667px;width:5px;height:15px;border-radius:2.5px;background:#7cc777;opacity:.85"></div>
<div class="r" style="left:1169.5px;top:659px;width:5px;height:25px;border-radius:2.5px;background:#c8c8c8;opacity:.85"></div>
<div class="r" style="left:1177.9px;top:668px;width:5px;height:11px;border-radius:2.5px;background:#7cc777;opacity:.85"></div>
<div class="r" style="left:1186.3px;top:651px;width:5px;height:30px;border-radius:2.5px;background:#a9a9a9;opacity:.85"></div>
<div class="r" style="left:1194.8px;top:666px;width:5px;height:24px;border-radius:2.5px;background:#92d48c;opacity:.85"></div>
<div class="r" style="left:1203.3px;top:663px;width:5px;height:18px;border-radius:2.5px;background:#a9a9a9;opacity:.85"></div>
<div class="t" style="left:1212px;top:657px;font:bold 21px/24px 'Liberation Sans',sans-serif;color:rgba(70,150,70,.75);transform:scale(.94,1.14);transform-origin:0 3px;letter-spacing:-0.5px;text-shadow:1px 1px 1px rgba(0,0,0,.25)">Mister-Office</div>
</body></html>
